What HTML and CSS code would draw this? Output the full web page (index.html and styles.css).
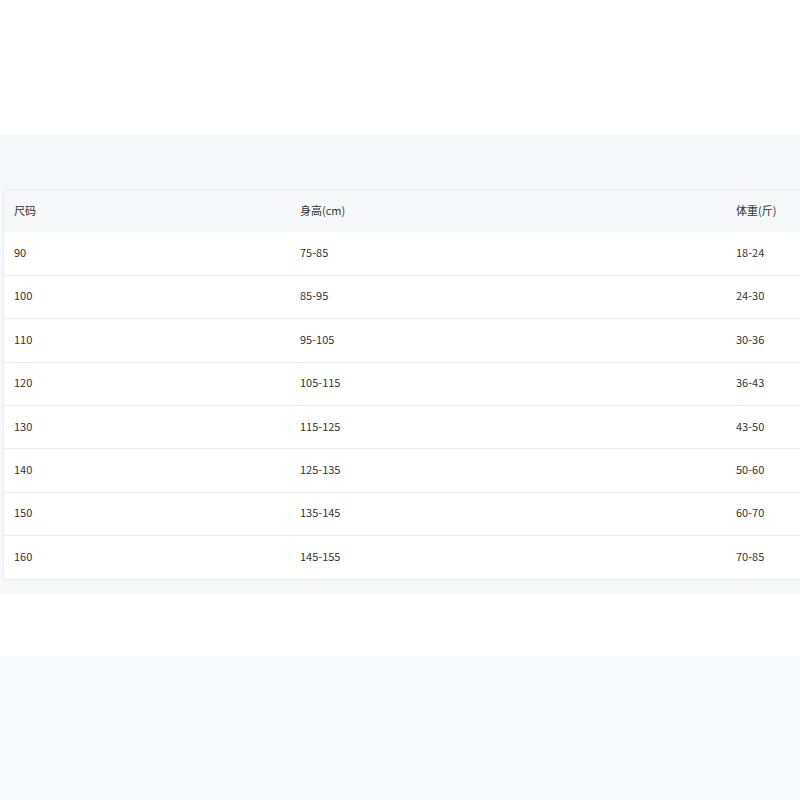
FILE: index.html
```html
<!DOCTYPE html>
<html lang="zh">
<head>
<meta charset="utf-8">
<link rel="stylesheet" href="styles.css">
</head>
<body>
<div class="top"></div>
<section class="panel">
  <table class="size-table">
    <colgroup><col class="c1"><col class="c2"><col class="c3"></colgroup>
    <thead>
      <tr><th>尺码</th><th>身高(cm)</th><th>体重(斤)</th></tr>
    </thead>
    <tbody>
      <tr><td>90</td><td>75-85</td><td>18-24</td></tr>
      <tr><td>100</td><td>85-95</td><td>24-30</td></tr>
      <tr><td>110</td><td>95-105</td><td>30-36</td></tr>
      <tr><td>120</td><td>105-115</td><td>36-43</td></tr>
      <tr><td>130</td><td>115-125</td><td>43-50</td></tr>
      <tr><td>140</td><td>125-135</td><td>50-60</td></tr>
      <tr><td>150</td><td>135-145</td><td>60-70</td></tr>
      <tr><td>160</td><td>145-155</td><td>70-85</td></tr>
    </tbody>
  </table>
</section>
<div class="gap"></div>
<div class="bottom"></div>
</body>
</html>
```
FILE: styles.css
```css
html, body {
  margin: 0;
  padding: 0;
  background: #ffffff;
  font-family: "Noto Sans CJK SC", sans-serif;
  overflow: hidden;
}
.top {
  height: 135px;
}
.panel {
  background: #f7f8f9;
  padding: 54px 0 14px 3px;
  overflow: hidden;
}
.size-table {
  width: 1000px;
  border-collapse: separate;
  border-spacing: 0;
  border: 1px solid #ececef;
  border-radius: 3px;
  background: #ffffff;
  font-size: 11px;
  color: #333333;
  table-layout: fixed;
}
.c1 { width: 286px; }
.c2 { width: 436px; }
.c3 { width: 278px; }
.size-table th,
.size-table td {
  text-align: left;
  font-weight: 400;
  padding: 0 10px 3px;
  box-sizing: border-box;
  height: 43.4px;
  vertical-align: middle;
}
.size-table th {
  background: #f7f8fa;
  height: 42.4px;
}
.size-table td {
  border-top: 1px solid #ececef;
}
.size-table tbody tr:first-child td {
  border-top: none;
  height: 42.4px;
}
.gap {
  height: 63px;
}
.bottom {
  height: 143px;
  background: #f9fafb;
}
```
